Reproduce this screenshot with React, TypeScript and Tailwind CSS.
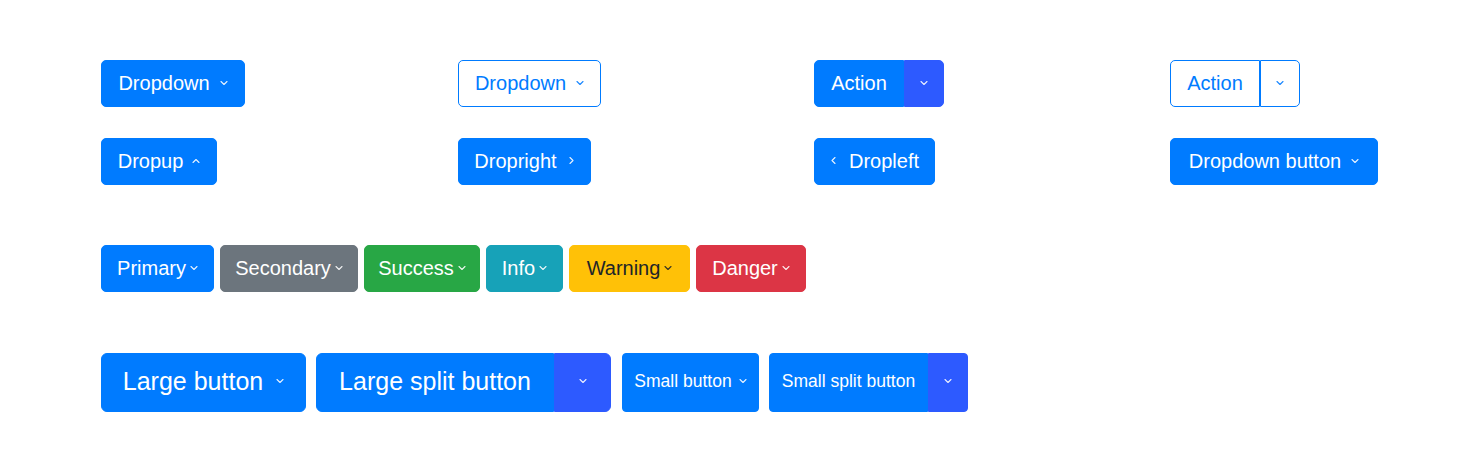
import React from "react";

type Dir = "down" | "up" | "right" | "left";

function Chevron({ dir = "down", className = "" }: { dir?: Dir; className?: string }) {
  const d =
    dir === "down"
      ? "M1 1.5 L4 4.5 L7 1.5"
      : dir === "up"
      ? "M1 4.5 L4 1.5 L7 4.5"
      : dir === "right"
      ? "M2 0.5 L5 3.5 L2 6.5"
      : "M5 0.5 L2 3.5 L5 6.5";
  const vb = dir === "down" || dir === "up" ? "0 0 8 6" : "0 0 7 7";
  const size = dir === "down" || dir === "up" ? "w-[8px] h-[6px]" : "w-[7px] h-[7px]";
  return (
    <svg viewBox={vb} className={`${size} shrink-0 opacity-90 ${className}`} fill="none">
      <path d={d} stroke="currentColor" strokeWidth="1.1" strokeLinecap="round" strokeLinejoin="round" />
    </svg>
  );
}

const base =
  "flex items-center justify-center border whitespace-nowrap leading-none pb-[2px]";
const primary = "bg-[#007bff] border-[#007bff] text-white";
const outline = "bg-white border-[#007bff] text-[#007bff]";
const split = "bg-[#2d5aff] border-[#2d5aff] text-white";

export default function App() {
  return (
    <div
      className="w-[1476px] h-[462px] bg-white pl-[101px] pt-[60px] text-[20px]"
      style={{ fontFamily: '"Liberation Sans", Arial, sans-serif' }}
    >
      {/* Rows 1-2 */}
      <div className="grid grid-cols-[357px_356px_356px_auto] gap-y-[31px]">
        <div>
          <button className={`${base} ${primary} w-[144px] h-[47px] gap-[10px] rounded-[5px]`}>
            <span>Dropdown</span>
            <Chevron />
          </button>
        </div>
        <div>
          <button className={`${base} ${outline} w-[143px] h-[47px] gap-[10px] rounded-[5px]`}>
            <span>Dropdown</span>
            <Chevron />
          </button>
        </div>
        <div className="flex">
          <button className={`${base} ${primary} w-[90px] h-[47px] rounded-l-[5px]`}>
            <span>Action</span>
          </button>
          <button className={`${base} ${split} w-[40px] h-[47px] rounded-r-[5px]`}>
            <Chevron />
          </button>
        </div>
        <div className="flex">
          <button className={`${base} ${outline} w-[90px] h-[47px] rounded-l-[5px]`}>
            <span>Action</span>
          </button>
          <button className={`${base} ${outline} w-[40px] h-[47px] rounded-r-[5px]`}>
            <Chevron />
          </button>
        </div>

        <div>
          <button className={`${base} ${primary} w-[116px] h-[47px] gap-[9px] rounded-[5px]`}>
            <span>Dropup</span>
            <Chevron dir="up" />
          </button>
        </div>
        <div>
          <button className={`${base} ${primary} w-[133px] h-[47px] gap-[11px] rounded-[5px]`}>
            <span>Dropright</span>
            <Chevron dir="right" />
          </button>
        </div>
        <div>
          <button className={`${base} ${primary} w-[121px] h-[47px] gap-[12px] rounded-[5px]`}>
            <Chevron dir="left" />
            <span>Dropleft</span>
          </button>
        </div>
        <div>
          <button className={`${base} ${primary} w-[208px] h-[47px] gap-[10px] rounded-[5px]`}>
            <span>Dropdown button</span>
            <Chevron />
          </button>
        </div>
      </div>

      {/* Row 3 */}
      <div className="flex gap-[6px] mt-[60px]">
        <button className={`${base} ${primary} w-[113px] h-[47px] gap-[4px] rounded-[5px]`}>
          <span>Primary</span>
          <Chevron />
        </button>
        <button className={`${base} bg-[#6c757d] border-[#6c757d] text-white w-[138px] h-[47px] gap-[4px] rounded-[5px]`}>
          <span>Secondary</span>
          <Chevron />
        </button>
        <button className={`${base} bg-[#28a745] border-[#28a745] text-white w-[116px] h-[47px] gap-[4px] rounded-[5px]`}>
          <span>Success</span>
          <Chevron />
        </button>
        <button className={`${base} bg-[#17a2b8] border-[#17a2b8] text-white w-[77px] h-[47px] gap-[4px] rounded-[5px]`}>
          <span>Info</span>
          <Chevron />
        </button>
        <button className={`${base} bg-[#ffc107] border-[#ffc107] text-[#212529] w-[121px] h-[47px] gap-[4px] rounded-[5px]`}>
          <span>Warning</span>
          <Chevron />
        </button>
        <button className={`${base} bg-[#dc3545] border-[#dc3545] text-white w-[110px] h-[47px] gap-[4px] rounded-[5px]`}>
          <span>Danger</span>
          <Chevron />
        </button>
      </div>

      {/* Row 4 */}
      <div className="flex mt-[61px] h-[58.5px]">
        <button className={`${base} ${primary} w-[205px] gap-[13px] rounded-[6px] text-[25px]`}>
          <span>Large button</span>
          <Chevron />
        </button>
        <div className="flex ml-[10px]">
          <button className={`${base} ${primary} w-[238px] rounded-l-[6px] text-[25px]`}>
            <span>Large split button</span>
          </button>
          <button className={`${base} ${split} w-[57px] rounded-r-[6px]`}>
            <Chevron />
          </button>
        </div>
        <button className={`${base} ${primary} ml-[11px] w-[137px] gap-[7px] rounded-[4px] text-[17.5px]`}>
          <span>Small button</span>
          <Chevron />
        </button>
        <div className="flex ml-[10px]">
          <button className={`${base} ${primary} w-[159px] rounded-l-[4px] text-[17.5px]`}>
            <span>Small split button</span>
          </button>
          <button className={`${base} ${split} w-[40px] rounded-r-[4px]`}>
            <Chevron />
          </button>
        </div>
      </div>
    </div>
  );
}
